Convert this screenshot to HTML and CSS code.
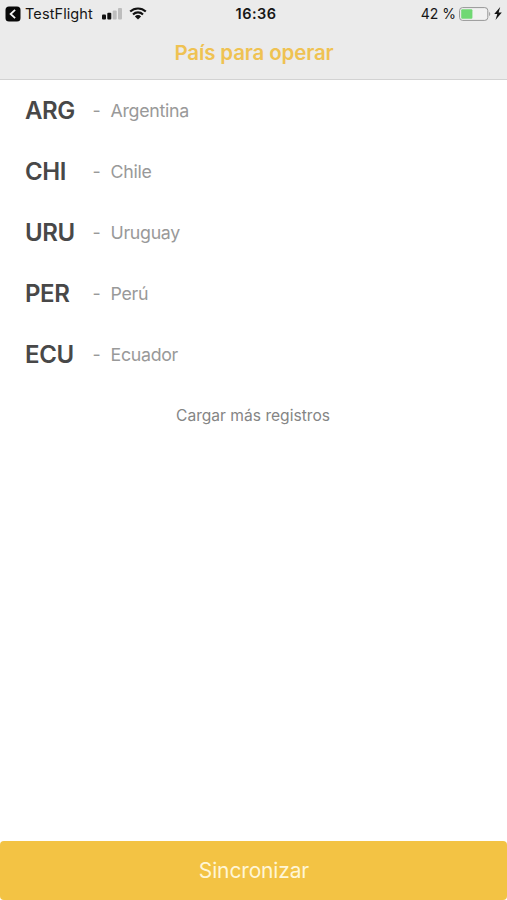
FILE: index.html
```html
<!DOCTYPE html>
<html lang="es">
<head>
<meta charset="utf-8">
<title>País para operar</title>
<link rel="stylesheet" href="styles.css">
</head>
<body>
<header class="header">
  <div class="status">
    <div class="status-left">
      <svg class="back" width="16" height="16" viewBox="0 0 16 16"><rect x=".5" y=".5" width="15" height="15" rx="3.5" fill="#080808"/><path d="M10.1 3.8 5.6 8l4.5 4.2" fill="none" stroke="#f4f4f4" stroke-width="1.8"/></svg>
      <span class="app">TestFlight</span>
      <svg class="signal" width="21" height="12" viewBox="0 0 21 12"><rect x="0" y="6.5" width="4" height="5" rx="1" fill="#111"/><rect x="5.3" y="4.7" width="4" height="6.8" rx="1" fill="#111"/><rect x="10.7" y="2.6" width="4" height="8.9" rx="1" fill="#bdbdbd"/><rect x="16" y="0" width="4" height="11.5" rx="1" fill="#bdbdbd"/></svg>
      <svg class="wifi" width="18" height="13" viewBox="0 0 18 13"><path d="M1.2 4.6a11.2 11.2 0 0 1 15.6 0M4 7.4a7.2 7.2 0 0 1 10 0" fill="none" stroke="#111" stroke-width="2.1"/><path d="M9 12.5 5.9 9.4a4.4 4.4 0 0 1 6.2 0Z" fill="#111"/></svg>
    </div>
    <time class="clock">16:36</time>
    <div class="status-right">
      <span class="percent">42 %</span>
      <svg width="32" height="14" viewBox="0 0 32 14"><rect x=".6" y=".6" width="28.2" height="12.8" rx="3" fill="#f1f1f1" stroke="#969696"/><rect x="2.2" y="2.2" width="11.2" height="9.6" rx="1" fill="#70d873"/><path d="M30.2 5c1.3.4 1.3 3.6 0 4Z" fill="#969696"/></svg>
      <svg class="bolt" width="8" height="13" viewBox="0 0 8 13"><path d="M6.2 0 .2 7h3.1L1.5 13 7.8 5.5H4.6Z" fill="#111"/></svg>
    </div>
  </div>
  <h1 class="title">País para operar</h1>
</header>
<main class="content">
  <ul class="countries">
    <li class="country"><span class="code">ARG</span><span class="dash">-</span><span class="name">Argentina</span></li>
    <li class="country"><span class="code">CHI</span><span class="dash">-</span><span class="name">Chile</span></li>
    <li class="country"><span class="code">URU</span><span class="dash">-</span><span class="name">Uruguay</span></li>
    <li class="country"><span class="code">PER</span><span class="dash">-</span><span class="name">Perú</span></li>
    <li class="country"><span class="code">ECU</span><span class="dash">-</span><span class="name">Ecuador</span></li>
  </ul>
  <div class="more"><span>Cargar más registros</span></div>
</main>
<button class="sync"><span>Sincronizar</span></button>
</body>
</html>
```
FILE: styles.css
```css
* { box-sizing: border-box; }
body {
  margin: 0;
  height: 900px;
  display: flex;
  flex-direction: column;
  background: #fff;
  font-family: Inter, "Liberation Sans", sans-serif;
  overflow: hidden;
}
svg { display: block; flex: none; }
.header {
  height: 80px;
  flex: none;
  background: #ebebeb;
  border-bottom: 1px solid #d2d2d2;
}
.status {
  height: 27px;
  display: grid;
  grid-template-columns: 1fr auto 1fr;
  align-items: center;
  padding: 0 5px;
  color: #161616;
  font-size: 14.5px;
  line-height: 18px;
  white-space: nowrap;
}
.status-left, .status-right { display: flex; align-items: center; }
.status-right { justify-content: flex-end; }
.app { margin-left: 4px; width: 68px; letter-spacing: 0.1px; }
.signal { margin-left: 9px; }
.wifi { margin-left: 6px; }
.clock { font-weight: 600; letter-spacing: 0.45px; margin-left: 5px; }
.percent { margin-right: 3px; font-size: 14px; }
.bolt { margin-left: 3px; }
.title {
  margin: 13px 0 0 1px;
  text-align: center;
  color: #efc252;
  font-size: 20.5px;
  line-height: 26px;
  font-weight: 600;
  letter-spacing: -0.15px;
}
.content { flex: 1; }
.countries { margin: 0; padding: 0; list-style: none; }
.country {
  height: 61px;
  display: flex;
  align-items: center;
  padding: 0 25px 1px;
}
.code {
  width: 67.5px;
  color: #484848;
  font-size: 24px;
  font-weight: 600;
  letter-spacing: -0.4px;
}
.dash, .name { color: #999; font-size: 17.8px; letter-spacing: -0.3px; }
.dash { width: 18px; }
.more {
  height: 61px;
  display: flex;
  align-items: center;
  justify-content: center;
  padding-right: 1px;
  color: #858585;
  font-size: 15.6px;
}
.sync {
  height: 59px;
  flex: none;
  width: 100%;
  padding: 1px 0 0 1px;
  border: 0;
  border-radius: 4px;
  background: #f3c344;
  color: #fff6d6;
  font: 400 21px/58px Inter, "Liberation Sans", sans-serif;
  letter-spacing: -0.15px;
}
```
